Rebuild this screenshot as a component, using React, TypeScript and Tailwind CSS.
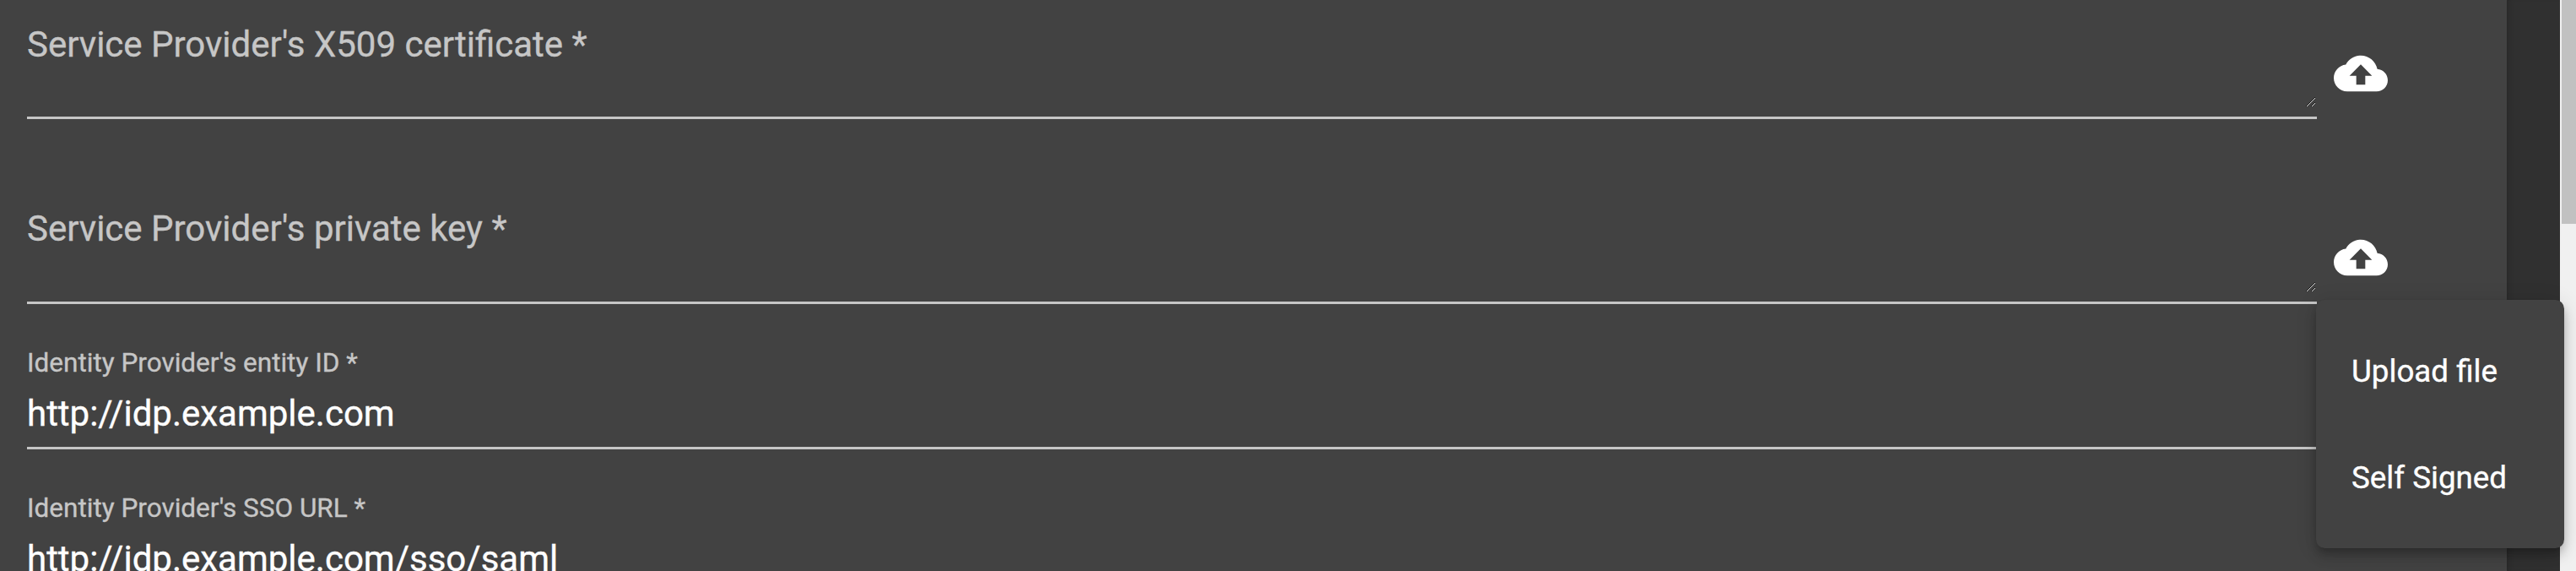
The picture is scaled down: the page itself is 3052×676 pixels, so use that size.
import React from "react";

function CloudUpload() {
  return (
    <svg viewBox="0 0 24 24" className="block size-16 shrink-0" fill="#fff" aria-hidden="true">
      <path d="M19.35 10.04C18.67 6.59 15.64 4 12 4 9.11 4 6.6 5.64 5.35 8.04 2.34 8.36 0 10.91 0 14c0 3.31 2.69 6 6 6h13c2.76 0 5-2.24 5-5 0-2.64-2.05-4.78-4.65-4.96zM14 13v4h-4v-4H7l5-5 5 5h-3z" />
    </svg>
  );
}

function ResizeGrip() {
  return (
    <svg
      viewBox="0 0 13 13"
      className="absolute right-[1px] bottom-[10px] size-[13px]"
      shapeRendering="crispEdges"
      fill="none"
      aria-hidden="true"
    >
      <path d="M0.5 11.5L11.5 0.5M6.5 11.5L11.5 6.5" stroke="#161616" />
      <path d="M1.5 11.5L11.5 1.5M7.5 11.5L11.5 7.5" stroke="#d8d8d8" />
    </svg>
  );
}

function TextareaField({ label, height }: { label: string; height: string }) {
  return (
    <div className="flex">
      <div className={`relative w-[2713px] border-b-3 border-[#c6c6c6] ${height}`}>
        <label className="block text-[42px] leading-[48px] text-[#c6c6c6]">{label}</label>
        <ResizeGrip />
      </div>
      <button type="button" className="ml-5 mt-[26.4px] h-16">
        <CloudUpload />
      </button>
    </div>
  );
}

function InputField({ label, value }: { label: string; value: string }) {
  return (
    <div className="flex h-[119px] w-[2790px] shrink-0 flex-col border-b-3 border-[#c6c6c6]">
      <label className="text-[31.5px] leading-[34px] text-[#c6c6c6]">{label}</label>
      <div className="mt-[19px] text-[42px] leading-[48px] text-white">{value}</div>
    </div>
  );
}

export default function App() {
  return (
    <div className="relative flex h-[676px] w-[3052px] overflow-hidden bg-[#303030] font-['Roboto',sans-serif] [-webkit-text-stroke:0.35px_currentColor]">
      <main className="flex h-full w-[2970px] flex-col overflow-hidden bg-[#424242] pt-[29px] pl-8">
        <TextareaField label="Service Provider's X509 certificate *" height="h-[112px]" />
        <div className="mt-[106px]">
          <TextareaField label="Service Provider's private key *" height="h-[113px]" />
        </div>
        <div className="mt-[53px] flex flex-col gap-[53px]">
          <InputField label="Identity Provider's entity ID *" value="http://idp.example.com" />
          <InputField label="Identity Provider's SSO URL *" value="http://idp.example.com/sso/saml" />
        </div>
      </main>
      <aside className="w-[63px] bg-[#303030] shadow-[inset_6px_0_6px_-4px_rgba(0,0,0,0.18)]" />
      <div className="h-full w-[19px] bg-[#f0f0f0] pl-[2px]">
        <div className="h-[265px] bg-[#c1c1c1]" />
      </div>
      <div
        role="menu"
        className="absolute top-[355px] left-[2744px] flex size-[294px] flex-col rounded-[10.5px] bg-[#424242] pt-[22px] pb-5 shadow-[0_5px_10px_-3px_rgba(0,0,0,0.2),0_10px_13px_0_rgba(0,0,0,0.14),0_3px_26px_0_rgba(0,0,0,0.12)]"
      >
        <button type="button" role="menuitem" className="h-[126px] px-[42px] text-left text-[36.75px] leading-[126px] text-white">
          Upload file
        </button>
        <button type="button" role="menuitem" className="h-[126px] px-[42px] text-left text-[36.75px] leading-[126px] text-white">
          Self Signed
        </button>
      </div>
    </div>
  );
}
